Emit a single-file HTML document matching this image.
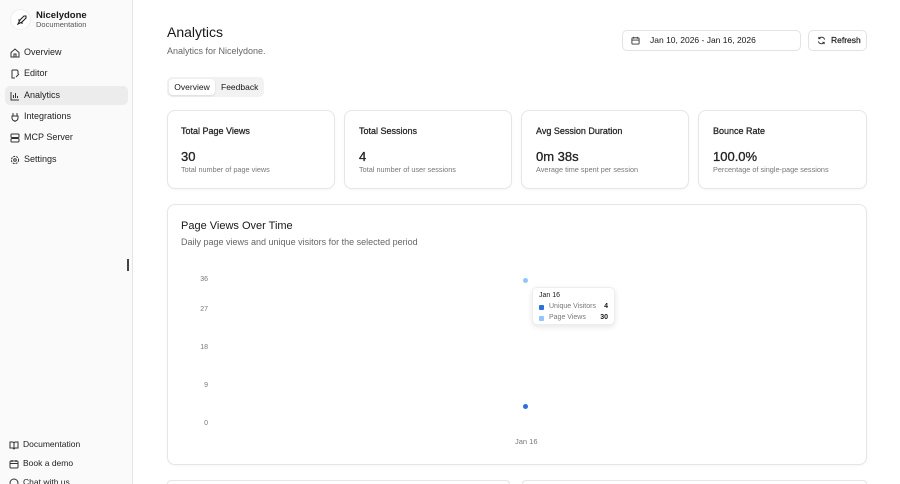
<!DOCTYPE html>
<html style="width:900px;height:484px;overflow:hidden"><head><meta charset="utf-8"><style>
*{box-sizing:border-box;margin:0;padding:0}
body{width:900px;height:484px;overflow:hidden;font-family:"Liberation Sans",sans-serif;color:#18181b;background:#fff;position:relative}
.sb{position:absolute;left:0;top:0;width:133px;height:484px;background:#fafafa;border-right:1px solid #e5e5e5}
.logo{position:absolute;left:10px;top:9px;width:21px;height:21px;border-radius:50%;background:#fff;border:1px solid #eee}
.brand{position:absolute;left:36px;top:10px;font-size:9.5px;font-weight:bold}
.brand2{position:absolute;left:36px;top:20px;font-size:7.5px;color:#555}
.nav{position:absolute;left:5px;width:123px;height:19px;border-radius:5px;font-size:9px;padding-left:19px;line-height:19px;color:#222}
.nav.act{background:#ececec}
.nav svg{position:absolute;left:5px;top:5px}
.foot{position:absolute;left:9px;font-size:8.5px;padding-left:14px;color:#222}
.foot svg{position:absolute;left:0;top:1px}
.card{position:absolute;border:1px solid #e6e6e6;border-radius:8px;background:#fff;box-shadow:0 1px 2px rgba(0,0,0,.04)}
.t{position:absolute;font-size:9px;color:#222;-webkit-text-stroke:0.25px #222}
.v{position:absolute;font-size:13px;color:#222;-webkit-text-stroke:0.3px #222}
.s{position:absolute;font-size:7.3px;color:#777}
.ax{position:absolute;font-size:7px;color:#777;text-align:right;width:20px}
</style></head><body>
<div class="sb">
 <div class="logo"><svg width="21" height="21" viewBox="0 0 21 21"><path d="M7 14l2-4 4-4 2 0 0 2-4 4-4 2zM9 10l-2 0M11 12l0 2" stroke="#222" stroke-width="1.1" fill="none"/></svg></div>
 <div class="brand">Nicelydone</div><div class="brand2">Documentation</div>
 <div class="nav" style="top:43px"><svg width="10" height="10" viewBox="0 0 10 10"><path d="M1 4.5L5 1l4 3.5V9H1z M4 9V6h2v3" stroke="#333" fill="none"/></svg>Overview</div>
 <div class="nav" style="top:64px"><svg width="10" height="10" viewBox="0 0 10 10"><path d="M2 1h5l1 1v3M2 1v8h3M6 8l3-3" stroke="#333" fill="none"/></svg>Editor</div>
 <div class="nav act" style="top:86px"><svg width="10" height="10" viewBox="0 0 10 10"><path d="M1 1v8h8M3.5 7V4M5.5 7V2M7.5 7V5" stroke="#333" fill="none"/></svg>Analytics</div>
 <div class="nav" style="top:107px"><svg width="10" height="10" viewBox="0 0 10 10"><path d="M3 1v3M7 1v3M2 4h6v2a3 3 0 0 1-6 0zM5 9v1" stroke="#333" fill="none"/></svg>Integrations</div>
 <div class="nav" style="top:128px"><svg width="10" height="10" viewBox="0 0 10 10"><rect x="1" y="1" width="8" height="3.5" rx="1" stroke="#333" fill="none"/><rect x="1" y="5.5" width="8" height="3.5" rx="1" stroke="#333" fill="none"/></svg>MCP Server</div>
 <div class="nav" style="top:150px"><svg width="10" height="10" viewBox="0 0 10 10"><circle cx="5" cy="5" r="3.6" stroke="#333" stroke-dasharray="2 1" fill="none"/><circle cx="5" cy="5" r="1.3" stroke="#333" fill="none"/></svg>Settings</div>
 <div class="foot" style="top:439px"><svg width="10" height="10" viewBox="0 0 10 10"><path d="M1 2h3l1 1 1-1h3v6H6l-1 1-1-1H1zM5 3v6" stroke="#333" fill="none"/></svg>Documentation</div>
 <div class="foot" style="top:458px"><svg width="10" height="10" viewBox="0 0 10 10"><rect x="1" y="2" width="8" height="7" rx="1" stroke="#333" fill="none"/><path d="M3 1v2M7 1v2M1 4.5h8" stroke="#333"/></svg>Book a demo</div>
 <div class="foot" style="top:477px"><svg width="10" height="10" viewBox="0 0 10 10"><circle cx="5" cy="5" r="4" stroke="#333" fill="none"/></svg>Chat with us</div>
 <div style="position:absolute;left:127px;top:259px;width:2px;height:12px;background:#444"></div>
</div>

<div style="position:absolute;left:167px;top:24px;font-size:14px">Analytics</div>
<div style="position:absolute;left:167px;top:46px;font-size:9px;color:#666">Analytics for Nicelydone.</div>
<div style="position:absolute;left:622px;top:30px;width:179px;height:21px;border:1px solid #e3e3e3;border-radius:5px;font-size:8.5px;line-height:19px;padding-left:27px">Jan 10, 2026 - Jan 16, 2026
 <svg style="position:absolute;left:8px;top:5px" width="9" height="9" viewBox="0 0 10 10"><rect x="1" y="2" width="8" height="7" rx="1" stroke="#333" fill="none"/><path d="M3 1v2M7 1v2M1 4.5h8" stroke="#333"/></svg></div>
<div style="position:absolute;left:808px;top:30px;width:59px;height:21px;border:1px solid #e3e3e3;border-radius:5px;font-size:8.5px;-webkit-text-stroke:0.2px #222;line-height:19px;padding-left:22px">Refresh
 <svg style="position:absolute;left:8px;top:5px" width="9" height="9" viewBox="0 0 10 10"><path d="M8.5 4A3.6 3.6 0 0 0 2 3M1.5 6A3.6 3.6 0 0 0 8 7M2 1v2h2M8 9V7H6" stroke="#333" fill="none"/></svg></div>

<div style="position:absolute;left:167px;top:77px;width:97px;height:20px;background:#f2f2f2;border-radius:5px"></div>
<div style="position:absolute;left:169px;top:79px;width:46px;height:16px;background:#fff;border-radius:4px;box-shadow:0 1px 2px rgba(0,0,0,.1);font-size:8.5px;line-height:16px;text-align:center">Overview</div>
<div style="position:absolute;left:221px;top:79px;font-size:8.5px;line-height:16px">Feedback</div>

<div class="card" style="left:167px;top:110px;width:168px;height:79px"></div>
<div class="card" style="left:344px;top:110px;width:168px;height:79px"></div>
<div class="card" style="left:521px;top:110px;width:168px;height:79px"></div>
<div class="card" style="left:698px;top:110px;width:169px;height:79px"></div>
<div class="t" style="left:181px;top:126px">Total Page Views</div><div class="v" style="left:181px;top:149px">30</div><div class="s" style="left:181px;top:165px">Total number of page views</div>
<div class="t" style="left:359px;top:126px">Total Sessions</div><div class="v" style="left:359px;top:149px">4</div><div class="s" style="left:359px;top:165px">Total number of user sessions</div>
<div class="t" style="left:536px;top:126px">Avg Session Duration</div><div class="v" style="left:536px;top:149px">0m 38s</div><div class="s" style="left:536px;top:165px">Average time spent per session</div>
<div class="t" style="left:713px;top:126px">Bounce Rate</div><div class="v" style="left:713px;top:149px">100.0%</div><div class="s" style="left:713px;top:165px">Percentage of single-page sessions</div>

<div class="card" style="left:167px;top:204px;width:700px;height:261px"></div>
<div style="position:absolute;left:181px;top:220px;font-size:11px">Page Views Over Time</div>
<div style="position:absolute;left:181px;top:237px;font-size:9px;color:#666">Daily page views and unique visitors for the selected period</div>
<div class="ax" style="left:188px;top:276px">36</div>
<div class="ax" style="left:188px;top:306px">27</div>
<div class="ax" style="left:188px;top:344px">18</div>
<div class="ax" style="left:188px;top:382px">9</div>
<div class="ax" style="left:188px;top:420px">0</div>
<div style="position:absolute;left:515px;top:437px;font-size:7.5px;color:#777">Jan 16</div>
<div style="position:absolute;left:523px;top:278px;width:5px;height:5px;border-radius:50%;background:#93c5fd"></div>
<div style="position:absolute;left:523px;top:404px;width:5px;height:5px;border-radius:50%;background:#2f6fde"></div>
<div style="position:absolute;left:532px;top:287px;width:83px;height:38px;background:#fff;border:1px solid #eee;border-radius:5px;box-shadow:0 2px 6px rgba(0,0,0,.1)">
 <div style="position:absolute;left:6px;top:4px;font-size:7px">Jan 16</div>
 <div style="position:absolute;left:6px;top:17px;width:5px;height:5px;background:#2f6fde;border-radius:1px"></div>
 <div style="position:absolute;left:16px;top:15px;font-size:7px;color:#777">Unique Visitors</div><div style="position:absolute;right:6px;top:15px;font-size:7px;font-weight:bold">4</div>
 <div style="position:absolute;left:6px;top:28px;width:5px;height:5px;background:#93c5fd;border-radius:1px"></div>
 <div style="position:absolute;left:16px;top:26px;font-size:7px;color:#777">Page Views</div><div style="position:absolute;right:6px;top:26px;font-size:7px;font-weight:bold">30</div>
</div>

<div class="card" style="left:167px;top:480px;width:343px;height:4px;border-bottom:none;border-radius:8px 8px 0 0"></div>
<div class="card" style="left:522px;top:480px;width:345px;height:4px;border-bottom:none;border-radius:8px 8px 0 0"></div>
</body></html>
